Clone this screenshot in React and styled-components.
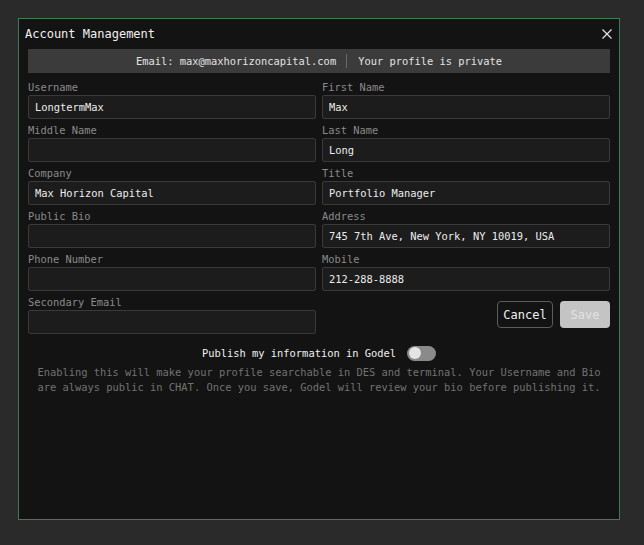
import React from "react";
import styled, { createGlobalStyle } from "styled-components";

const Global = createGlobalStyle`
  html, body { margin: 0; padding: 0; background: #2a2a2a; }
  body { font-family: "DejaVu Sans Mono", "Liberation Mono", monospace; }
  * { box-sizing: border-box; }
`;

const Page = styled.div`
  padding: 18px;
  min-height: 545px;
`;

const Dialog = styled.div`
  width: 602px;
  height: 502px;
  background: #131313;
  border: 1px solid #3e7b55;
  display: flex;
  flex-direction: column;
`;

const TitleBar = styled.div`
  height: 28px;
  display: flex;
  align-items: center;
  justify-content: space-between;
  padding: 0 7px 0 6px;
  margin-top: 1px;
`;

const Title = styled.h2`
  margin: 0;
  font-size: 12px;
  font-weight: normal;
  color: #f0f0f0;
`;

const CloseButton = styled.button`
  width: 10px;
  height: 10px;
  padding: 0;
  border: 0;
  background: transparent;
  display: flex;
  align-items: center;
  justify-content: center;
  cursor: pointer;
`;

const Body = styled.div`
  padding: 1px 9px 0 9px;
  display: flex;
  flex-direction: column;
`;

const InfoBar = styled.div`
  height: 24px;
  background: #3b3b3b;
  display: flex;
  align-items: center;
  justify-content: center;
  font-size: 10.4px;
  color: #e2e2e2;
`;

const Divider = styled.span`
  width: 1px;
  height: 14px;
  background: #686868;
  margin: 0 11px 0 10px;
`;

const Form = styled.div`
  margin-top: 7px;
  display: grid;
  grid-template-columns: 1fr 1fr;
  column-gap: 6px;
  row-gap: 4px;
`;

const Field = styled.label`
  display: flex;
  flex-direction: column;
  gap: 1px;
`;

const Label = styled.span`
  font-size: 10.4px;
  line-height: 14px;
  color: #8a8a8a;
`;

const Input = styled.input`
  height: 24px;
  width: 100%;
  background: #1c1c1c;
  border: 1px solid #3a3a3a;
  border-radius: 2px;
  padding: 0 6px;
  color: #ececec;
  font-family: inherit;
  font-size: 10.4px;
  outline: none;
`;

const Actions = styled.div`
  display: flex;
  justify-content: flex-end;
  align-items: center;
  gap: 7px;
`;

const Button = styled.button`
  height: 27px;
  border-radius: 4px;
  font-family: inherit;
  font-size: 12px;
  padding: 0;
  width: ${(p) => p.$w}px;
  background: ${(p) => (p.$primary ? "#c4c4c4" : "#131313")};
  color: ${(p) => (p.$primary ? "#e2e2e2" : "#f0f0f0")};
  border: ${(p) => (p.$primary ? "0" : "1px solid #5c5c5c")};
`;

const PublishRow = styled.div`
  margin-top: 11px;
  height: 16px;
  display: flex;
  align-items: center;
  justify-content: center;
  gap: 10px;
  font-size: 10.4px;
  color: #f0f0f0;
`;

const Toggle = styled.span`
  width: 29px;
  height: 15px;
  border-radius: 8px;
  background: #8a8a8a;
  display: flex;
  align-items: center;
  padding: 0 2px;
  margin-left: 1px;
`;

const Knob = styled.span`
  width: 12px;
  height: 12px;
  border-radius: 50%;
  background: #e4e4e4;
`;

const Note = styled.p`
  margin: 4px 0 0;
  font-size: 10.4px;
  line-height: 15px;
  color: #727272;
  text-align: center;
`;

const left = [
  ["Username", "LongtermMax"],
  ["Middle Name", ""],
  ["Company", "Max Horizon Capital"],
  ["Public Bio", ""],
  ["Phone Number", ""],
  ["Secondary Email", ""],
];
const right = [
  ["First Name", "Max"],
  ["Last Name", "Long"],
  ["Title", "Portfolio Manager"],
  ["Address", "745 7th Ave, New York, NY 10019, USA"],
  ["Mobile", "212-288-8888"],
];

function FormField({ label, value }) {
  return (
    <Field>
      <Label>{label}</Label>
      <Input defaultValue={value} readOnly />
    </Field>
  );
}

export default function App() {
  const cells = [];
  for (let i = 0; i < 6; i++) {
    cells.push(<FormField key={"l" + i} label={left[i][0]} value={left[i][1]} />);
    if (i < 5) {
      cells.push(<FormField key={"r" + i} label={right[i][0]} value={right[i][1]} />);
    } else {
      cells.push(
        <Actions key="actions">
          <Button $w={56}>Cancel</Button>
          <Button $w={50} $primary>Save</Button>
        </Actions>
      );
    }
  }
  return (
    <>
      <Global />
      <Page>
        <Dialog>
          <TitleBar>
            <Title>Account Management</Title>
            <CloseButton aria-label="Close">
              <svg width="10" height="10" viewBox="0 0 10 10">
                <path d="M0.5 0.5 L9.5 9.5 M9.5 0.5 L0.5 9.5" stroke="#e6e6e6" strokeWidth="1.2" />
              </svg>
            </CloseButton>
          </TitleBar>
          <Body>
            <InfoBar>
              <span>Email: max@maxhorizoncapital.com</span>
              <Divider />
              <span>Your profile is private</span>
            </InfoBar>
            <Form>{cells}</Form>
            <PublishRow>
              <span>Publish my information in Godel</span>
              <Toggle>
                <Knob />
              </Toggle>
            </PublishRow>
            <Note>
              Enabling this will make your profile searchable in DES and terminal. Your Username and Bio are always public in CHAT. Once you save, Godel will review your bio before publishing it.
            </Note>
          </Body>
        </Dialog>
      </Page>
    </>
  );
}
